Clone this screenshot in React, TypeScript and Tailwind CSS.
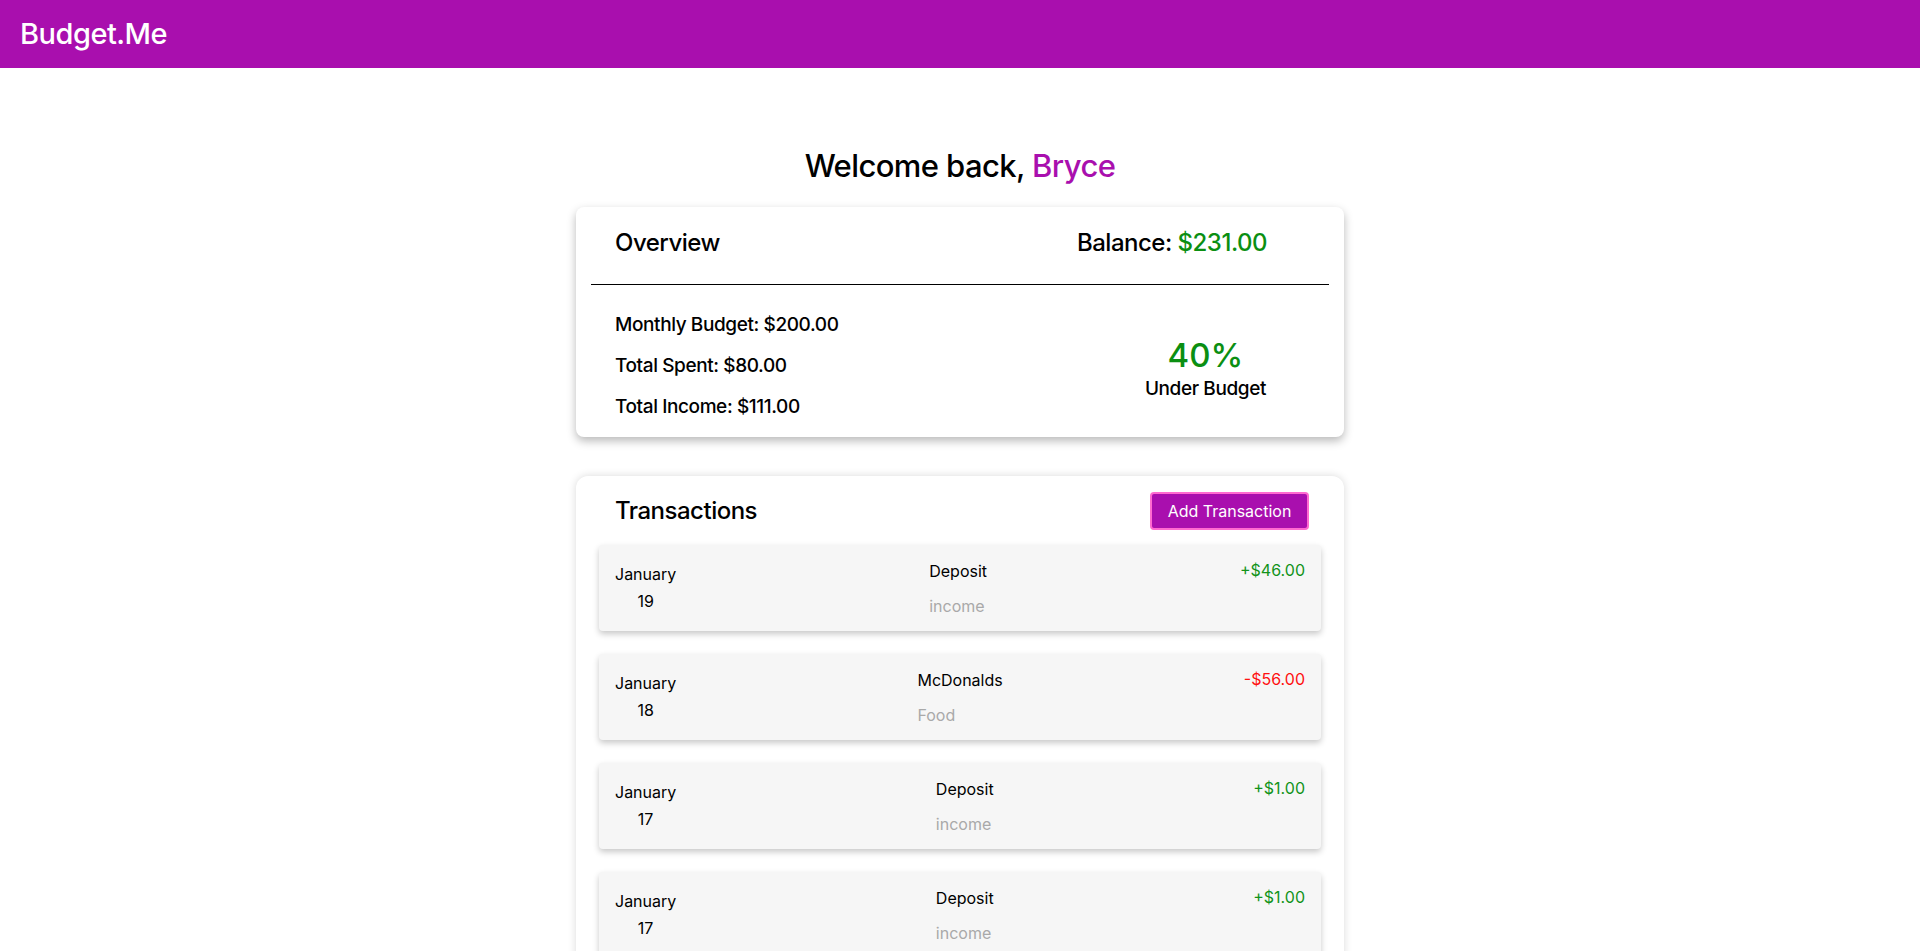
const transactions = [
  { month: "January", day: 19, title: "Deposit", category: "income", amount: "+$46.00", positive: true },
  { month: "January", day: 18, title: "McDonalds", category: "Food", amount: "-$56.00", positive: false },
  { month: "January", day: 17, title: "Deposit", category: "income", amount: "+$1.00", positive: true },
  { month: "January", day: 17, title: "Deposit", category: "income", amount: "+$1.00", positive: true },
  { month: "January", day: 16, title: "Deposit", category: "income", amount: "+$10.00", positive: true },
];

function TransactionRow({ t }: { t: (typeof transactions)[number] }) {
  return (
    <div className="flex h-[86px] items-center justify-between rounded-sm bg-[#f6f6f6] px-4 shadow-[0_3px_6px_rgba(0,0,0,0.22)]">
      <div className="flex flex-col items-center text-[16px] leading-[27px] text-black">
        <span>{t.month}</span>
        <span>{t.day}</span>
      </div>
      <div className="flex flex-col gap-[13px] self-center text-[16px] leading-[22px]">
        <span className="text-black">{t.title}</span>
        <span className="text-[#a9a9a9]">{t.category}</span>
      </div>
      <div className={`self-start pt-[13px] text-[16px] ${t.positive ? "text-[#12931a]" : "text-[#ff1010]"}`}>
        {t.amount}
      </div>
    </div>
  );
}

export default function App() {
  return (
    <div className="min-h-screen bg-white font-['Inter','Noto_Sans',sans-serif] text-black">
      <header className="flex h-[68px] items-center bg-[#a90fae] px-[20px]">
        <h1 className="text-[29px] font-medium tracking-[-0.5px] text-white">Budget.Me</h1>
      </header>

      <main className="mx-auto flex w-[768px] flex-col pt-[77px]">
        <h2 className="text-center text-[31px] font-medium leading-[42px] tracking-[-0.6px]">
          Welcome back, <span className="text-[#a90fae]">Bryce</span>
        </h2>

        <section className="mt-[20px] rounded-lg bg-white shadow-[0_4px_10px_rgba(0,0,0,0.28)]">
          <div className="flex h-[77px] items-start justify-between pl-[39px] pr-[77px] pt-[20px]">
            <h3 className="text-[24px] font-medium leading-[32px] tracking-[-0.5px]">Overview</h3>
            <div className="text-[24px] font-medium leading-[32px] tracking-[-0.5px]">
              Balance: <span className="text-[#0b8f12]">$231.00</span>
            </div>
          </div>
          <hr className="mx-[15px] border-t border-black" />
          <div className="flex items-center justify-between pb-[16px] pl-[39px] pr-[77px] pt-[26px]">
            <div className="flex flex-col gap-[13px] text-[19px] font-medium leading-[28px] tracking-[-0.4px]">
              <span>Monthly Budget: $200.00</span>
              <span>Total Spent: $80.00</span>
              <span>Total Income: $111.00</span>
            </div>
            <div className="flex flex-col items-center pr-[1px] pt-[6px]">
              <span className="text-[33px] font-medium leading-[40px] text-[#0b8f12]">40%</span>
              <span className="text-[19px] font-medium leading-[28px] tracking-[-0.4px]">Under Budget</span>
            </div>
          </div>
        </section>

        <section className="mt-[39px] rounded-xl bg-white shadow-[0_0_8px_rgba(0,0,0,0.15)]">
          <div className="flex h-[69px] items-center justify-between pl-[39px] pr-[35px]">
            <h3 className="text-[24px] font-medium tracking-[-0.5px]">Transactions</h3>
            <button className="h-[38px] w-[159px] rounded-[4px] border-2 border-[#ff6ad0] bg-[#a90fae] text-[16px] text-white">
              Add Transaction
            </button>
          </div>
          <div className="flex flex-col gap-[23px] px-[23px] pb-[24px]">
            {transactions.map((t, i) => (
              <TransactionRow key={i} t={t} />
            ))}
          </div>
        </section>
      </main>
    </div>
  );
}
